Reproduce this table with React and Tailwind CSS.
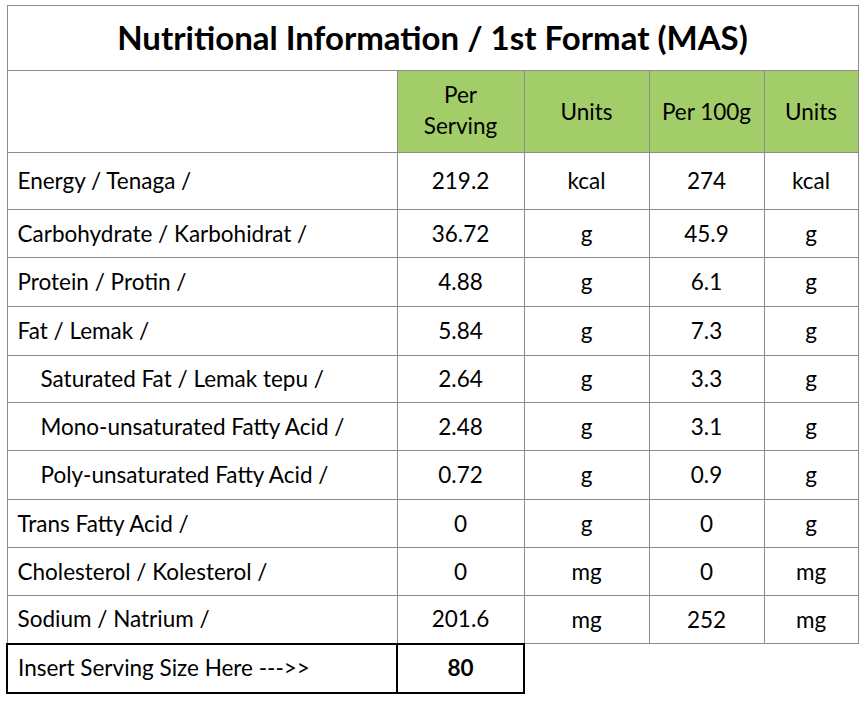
const rows = [
  { name: 'Energy / Tenaga /', serving: '219.2', unit: 'kcal', per100: '274', h: 'h-[57px]' },
  { name: 'Carbohydrate / Karbohidrat /', serving: '36.72', unit: 'g', per100: '45.9' },
  { name: 'Protein / Protin /', serving: '4.88', unit: 'g', per100: '6.1', h: 'h-[49px]' },
  { name: 'Fat / Lemak /', serving: '5.84', unit: 'g', per100: '7.3', h: 'h-[49px]' },
  { name: 'Saturated Fat / Lemak tepu /', serving: '2.64', unit: 'g', per100: '3.3', indent: true, h: 'h-[47px]' },
  { name: 'Mono-unsaturated Fatty Acid /', serving: '2.48', unit: 'g', per100: '3.1', indent: true },
  { name: 'Poly-unsaturated Fatty Acid /', serving: '0.72', unit: 'g', per100: '0.9', indent: true, h: 'h-[49px]' },
  { name: 'Trans Fatty Acid /', serving: '0', unit: 'g', per100: '0' },
  { name: 'Cholesterol / Kolesterol /', serving: '0', unit: 'mg', per100: '0' },
  { name: 'Sodium / Natrium /', serving: '201.6', unit: 'mg', per100: '252' },
]

const cell = 'border border-[#8c8c8c] text-center align-middle'

export default function App() {
  return (
    <div className="min-h-[706px] bg-white pl-[6px] pt-[5px] text-black" style={{ fontFamily: 'Lato, "Open Sans", sans-serif' }}>
      <table className="w-[851px] table-fixed border-collapse text-[22.5px] leading-[31px]">
        <colgroup>
          <col className="w-[390px]" />
          <col className="w-[127px]" />
          <col className="w-[125px]" />
          <col className="w-[115px]" />
          <col className="w-[94px]" />
        </colgroup>
        <tbody>
          <tr className="h-[65px]">
            <td colSpan={5} className={`${cell} pb-[1px] text-[33px] font-bold`}>
              Nutritional Information / 1st Format (MAS)
            </td>
          </tr>
          <tr className="h-[82px]">
            <td className={cell}></td>
            <td className={`${cell} bg-[#a2cd68] px-4 pb-[3px]`}>Per Serving</td>
            <td className={`${cell} bg-[#a2cd68]`}>Units</td>
            <td className={`${cell} bg-[#a2cd68]`}>Per 100g</td>
            <td className={`${cell} bg-[#a2cd68]`}>Units</td>
          </tr>
          {rows.map((r) => (
            <tr key={r.name} className={r.h || 'h-[48px]'}>
              <td className={`${cell} pb-[1px] text-left ${r.indent ? 'pl-[33px]' : 'pl-[10px]'}`}>{r.name}</td>
              <td className={`${cell} pb-[1px]`}>{r.serving}</td>
              <td className={`${cell} pb-[1px]`}>{r.unit}</td>
              <td className={`${cell} pb-[1px]`}>{r.per100}</td>
              <td className={`${cell} pb-[1px]`}>{r.unit}</td>
            </tr>
          ))}
          <tr className="h-[49px]">
            <td className="border-2 border-black pb-[1px] pl-[10px] text-left align-middle">Insert Serving Size Here ---&gt;&gt;</td>
            <td className="border-2 border-black pb-[1px] text-center align-middle font-bold">80</td>
            <td className="border-t border-[#8c8c8c]"></td>
            <td className="border-t border-[#8c8c8c]"></td>
            <td className="border-t border-[#8c8c8c]"></td>
          </tr>
        </tbody>
      </table>
    </div>
  )
}
